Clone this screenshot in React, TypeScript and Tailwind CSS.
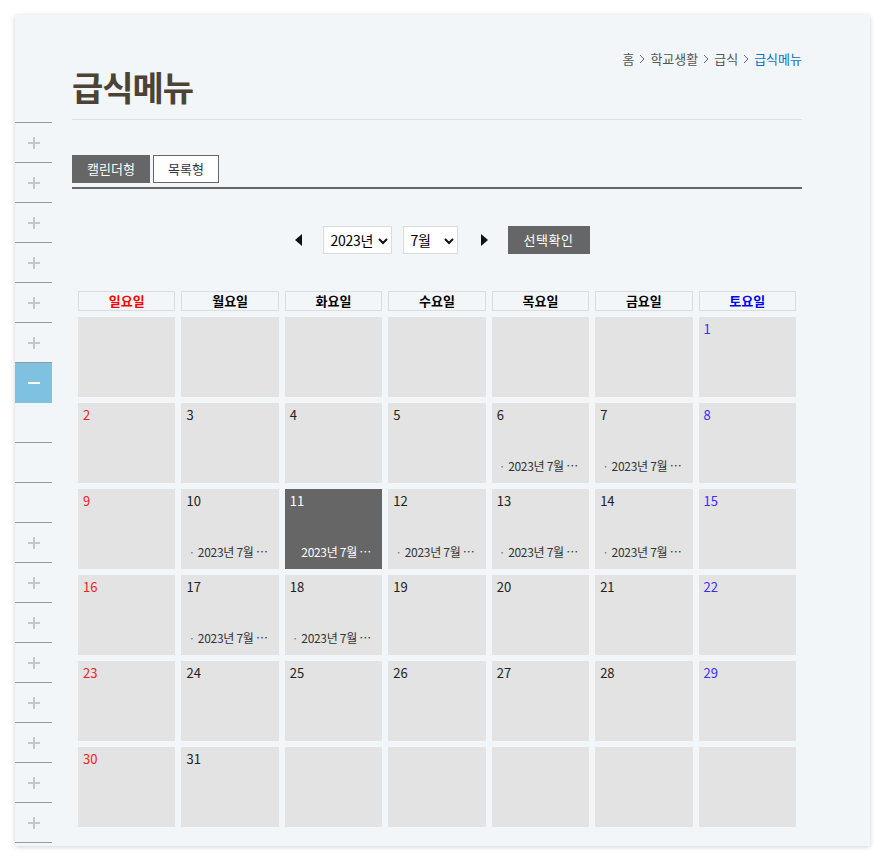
import React from 'react';

const font = { fontFamily: '"Noto Sans CJK KR", "Noto Sans", sans-serif' };

type Item = 'plus' | 'active' | 'blank';
const sideItems: Item[] = [
  'plus', 'plus', 'plus', 'plus', 'plus', 'plus',
  'active', 'blank', 'blank', 'blank',
  'plus', 'plus', 'plus', 'plus', 'plus', 'plus', 'plus', 'plus',
];

const weekDays = ['일요일', '월요일', '화요일', '수요일', '목요일', '금요일', '토요일'];
const menuDays = [6, 7, 10, 11, 12, 13, 14, 17, 18];
const today = 11;

const Plus = () => (
  <svg width="12" height="12" viewBox="0 0 12 12">
    <path d="M6 0v12M0 6h12" stroke="#c6c6c6" strokeWidth="2" />
  </svg>
);

const Chevron = () => (
  <svg width="6" height="10" viewBox="0 0 6 10" className="mx-[5px]">
    <path d="M1 1l4 4-4 4" stroke="#666" strokeWidth="1" fill="none" />
  </svg>
);

const SelectBox = ({ value, width }: { value: string; width: string }) => (
  <div className={`relative h-[28px] ${width} bg-white border border-[#dcdcdc]`}>
    <span className="absolute left-[7px] top-[3px] text-[14px] tracking-[-0.3px] text-black">{value}</span>
    <svg width="10" height="7" viewBox="0 0 10 7" className="absolute right-[3px] top-[11px]">
      <path d="M1 1l4 4 4-4" stroke="#111" strokeWidth="2" fill="none" />
    </svg>
  </div>
);

const DayCell = ({ day, col }: { day: number | null; col: number }) => {
  if (day === null) return <div className="h-[80px] bg-[#e3e3e3]" />;
  const isToday = day === today;
  const numColor = isToday
    ? 'text-white'
    : col === 0
      ? 'text-[#ee1c25]'
      : col === 6
        ? 'text-[#3a2bff]'
        : 'text-[#222]';
  return (
    <div className={`h-[80px] flex flex-col justify-between pt-[3px] pb-[8px] pl-[5px] ${isToday ? 'bg-[#666]' : 'bg-[#e3e3e3]'}`}>
      <span className={`text-[13px] leading-[18px] ${numColor}`}>{day}</span>
      {menuDays.includes(day) && (
        <span className={`pl-[2px] text-[12px] leading-[18px] whitespace-nowrap tracking-[-0.3px] ${isToday ? 'text-white' : 'text-[#333]'}`}>
          <span className={`mr-[3px] ${isToday ? 'text-[#666]' : 'text-[#777]'}`}>·</span>
          2023년 7월 ⋯
        </span>
      )}
    </div>
  );
};

const App = () => {
  const cells: (number | null)[] = [...Array(6).fill(null)];
  for (let d = 1; d <= 31; d++) cells.push(d);
  while (cells.length < 42) cells.push(null);

  return (
    <div className="min-h-[862px] bg-white p-[15px] pb-[16px]" style={font}>
      <div className="flex h-[831px] bg-[#f3f6f9] shadow-[0_1px_5px_rgba(0,0,0,0.18)]">
        <aside className="w-[37px] shrink-0 pt-[107px]">
          <div className="border-t border-[#999]">
            {sideItems.map((it, i) =>
              it === 'active' ? (
                <div key={i} className="h-[40px] bg-[#7ec1e1] flex items-center justify-center">
                  <span className="block w-[12px] h-[2px] bg-white" />
                </div>
              ) : (
                <div key={i} className="h-[40px] border-b border-[#999] flex items-center justify-center">
                  {it === 'plus' && <Plus />}
                </div>
              ),
            )}
          </div>
        </aside>

        <main className="w-[730px] ml-[20px]">
          <header className="pt-[34px] border-b border-[#dcdfe3] pb-[14px]">
            <nav className="h-[20px] flex items-center justify-end text-[13px] text-[#555]">
              <span>홈</span>
              <Chevron />
              <span>학교생활</span>
              <Chevron />
              <span>급식</span>
              <Chevron />
              <span className="text-[#0b72c4]">급식메뉴</span>
            </nav>
            <h1 className="h-[36px] leading-[36px] text-[34px] font-bold text-[#4b4434] tracking-[-1px]">급식메뉴</h1>
          </header>

          <div className="mt-[35px] flex gap-[3px] pb-[4px] border-b-2 border-[#666]">
            <button className="w-[78px] h-[28px] bg-[#666] text-white text-[13px]">캘린더형</button>
            <button className="w-[66px] h-[28px] bg-white border border-[#666] text-[#333] text-[13px]">목록형</button>
          </div>

          <div className="mt-[37px] flex items-center justify-center pl-[10px]">
            <svg width="8" height="12" viewBox="0 0 8 12" className="mr-[20px]">
              <path d="M7 0v12L0 6z" fill="#111" />
            </svg>
            <SelectBox value="2023년" width="w-[69px]" />
            <div className="w-[11px]" />
            <SelectBox value="7월" width="w-[55px]" />
            <svg width="8" height="12" viewBox="0 0 8 12" className="ml-[22px] mr-[20px]">
              <path d="M1 0v12l7-6z" fill="#111" />
            </svg>
            <button className="w-[82px] h-[28px] bg-[#666] text-white text-[13px] tracking-[0.5px]">선택확인</button>
          </div>

          <div className="mt-[37px] px-[6px] grid grid-cols-7 gap-[6px]">
            {weekDays.map((w, i) => (
              <div
                key={w}
                className={`h-[20px] border border-[#dcdcdc] text-center text-[13px] leading-[18px] font-bold ${
                  i === 0 ? 'text-[#f00]' : i === 6 ? 'text-[#00f]' : 'text-black'
                }`}
              >
                {w}
              </div>
            ))}
            {cells.map((d, i) => (
              <DayCell key={i} day={d} col={i % 7} />
            ))}
          </div>
        </main>
      </div>
    </div>
  );
};

export default App;
